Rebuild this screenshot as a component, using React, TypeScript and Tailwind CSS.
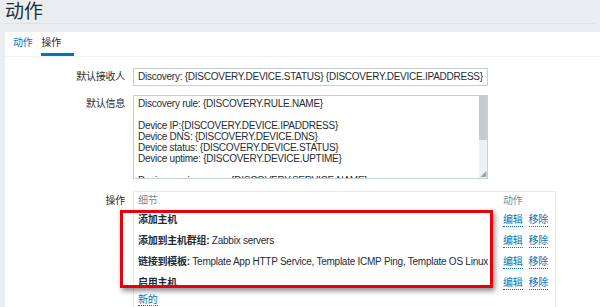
const font = { fontFamily: '"Liberation Sans", Arial, "Noto Sans CJK SC", sans-serif' };

const ops = [
  { label: '添加主机', value: '' },
  { label: '添加到主机群组:', value: ' Zabbix servers' },
  { label: '链接到模板:', value: ' Template App HTTP Service, Template ICMP Ping, Template OS Linux' },
  { label: '启用主机', value: '' },
];

const message = [
  'Discovery rule: {DISCOVERY.RULE.NAME}',
  '',
  'Device IP:{DISCOVERY.DEVICE.IPADDRESS}',
  'Device DNS: {DISCOVERY.DEVICE.DNS}',
  'Device status: {DISCOVERY.DEVICE.STATUS}',
  'Device uptime: {DISCOVERY.DEVICE.UPTIME}',
  '',
  'Device service name: {DISCOVERY.SERVICE.NAME}',
];

const App = () => {
  return (
    <div className="h-[307px] w-[600px] overflow-hidden bg-[#ebeef0] text-[#1f2c33]" style={font}>
      <div className="mx-[5px] h-[24px] border-b border-[#dde2e5] pt-[1px]">
        <h1 className="text-[19px] leading-[22px] text-[#1f2c33]">动作</h1>
      </div>
      <div className="relative ml-[5px] mt-[8px] h-[300px] bg-white text-[10px] tracking-[-0.25px]">
        <div className="flex h-[25px] items-end gap-[8px] border-b border-[#eef1f3] pl-[8px]">
          <div className="pb-[6px] text-[#0275b8]">动作</div>
          <div className="border-b-[3px] border-[#0275b8] pb-[3px] pl-[1px] pr-[13px] text-[#1f2c33]">操作</div>
        </div>

        <div className="grid grid-cols-[120px_1fr] gap-x-[8px] pt-[11px]">
          <div className="pt-[2px] text-right leading-[14px]">默认接收人</div>
          <div className="h-[18px] w-[355px] whitespace-nowrap border border-[#c5cfd4] px-[4px] leading-[16px]">
            Discovery: {'{DISCOVERY.DEVICE.STATUS}'} {'{DISCOVERY.DEVICE.IPADDRESS}'}
          </div>

          <div className="mt-[9px] pt-[2px] text-right leading-[14px]">默认信息</div>
          <div className="mt-[9px] flex h-[84px] w-[355px] overflow-hidden border border-[#c5cfd4]">
            <div className="flex-1 overflow-hidden px-[4px] pt-[2px] leading-[11px]">
              {message.map((line, i) => (
                <div key={i} className="h-[11px] whitespace-nowrap">{line}</div>
              ))}
            </div>
            <div className="relative w-[8px] bg-[#eef1f3]">
              <div className="h-[44px] bg-[#c4ccd0]" />
              <div className="absolute bottom-[1px] right-[1px] text-[6px] leading-[6px] text-[#9aa6ad]">◢</div>
            </div>
          </div>

          <div className="mt-[12px] pt-[3px] text-right leading-[14px]">操作</div>
          <div className="mt-[12px] w-[423px] border border-[#e4e9ec] pl-[4px]">
            <div className="flex h-[16px] items-center text-[#768d99]">
              <div className="w-[365px]">细节</div>
              <div>动作</div>
            </div>
            {ops.map((op) => (
              <div key={op.label} className="flex h-[21px] items-end pb-[2px]">
                <div className="w-[365px] whitespace-nowrap">
                  <span className="font-bold">{op.label}</span>
                  {op.value}
                </div>
                <div className="flex gap-[6px] text-[#0275b8]">
                  <span className="border-b border-dotted border-[#0275b8] leading-[13px]">编辑</span>
                  <span className="border-b border-dotted border-[#0275b8] leading-[13px]">移除</span>
                </div>
              </div>
            ))}
            <div>
              <span className="border-b border-dotted border-[#0275b8] leading-[13px] text-[#0275b8]">新的</span>
            </div>
          </div>
        </div>

        <div className="absolute left-[115px] top-[178px] h-[78px] w-[373px] border-[3px] border-[#e8000b] shadow-[2px_3px_5px_rgba(0,0,0,0.45)]" />
      </div>
    </div>
  );
};

export default App;
